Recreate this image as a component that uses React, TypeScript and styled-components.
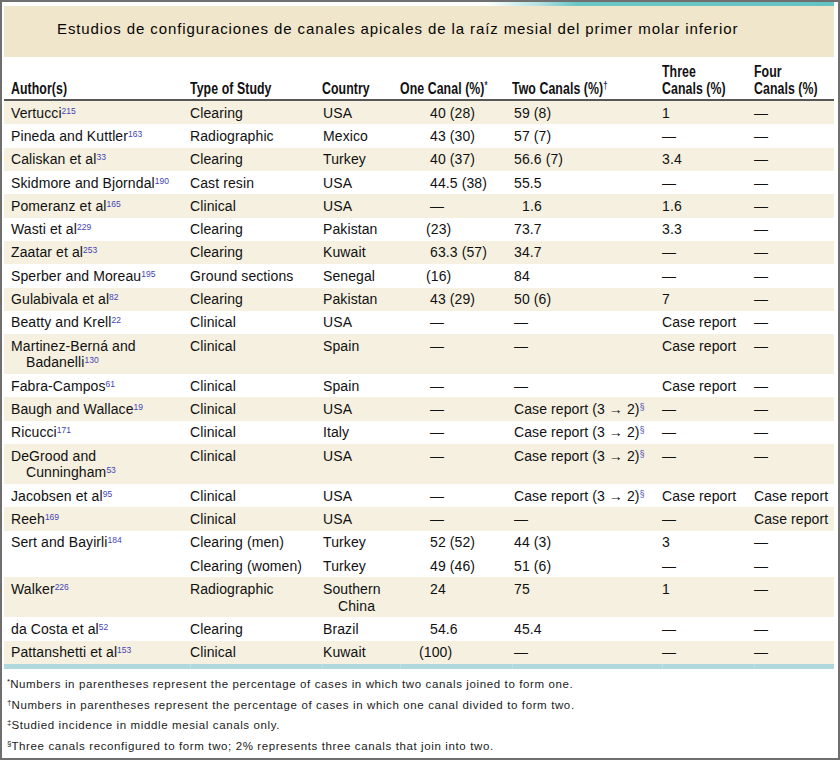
import React from "react";
import styled, { createGlobalStyle } from "styled-components";

const Global = createGlobalStyle`
  html, body { margin: 0; padding: 0; background: #ffffff; }
  body { font-family: "Liberation Sans", Arial, sans-serif; }
`;

const Frame = styled.div`
  width: 840px;
  height: 760px;
  box-sizing: border-box;
  border: 2px solid #6f6f6f;
  background: #ffffff;
  overflow: hidden;
  padding: 0 4px 0 2px;
`;

const TopStrip = styled.div`
  height: 4px;
  background: linear-gradient(90deg, #ffffff 0%, #ffffff 58%, #b9e3e3 64%, #6cc6c6 69%, #66c3c3 100%);
`;

const TitleBand = styled.div`
  height: 51px;
  background: #f0e6cb;
  display: flex;
  align-items: center;
  padding-left: 53px;
  padding-bottom: 7px;
  box-sizing: border-box;
`;

const Title = styled.h1`
  margin: 0;
  font-family: "Liberation Sans", Arial, sans-serif;
  font-weight: normal;
  font-size: 15px;
  letter-spacing: 0.9px;
  color: #050505;
`;

const Table = styled.table`
  width: 830px;
  border-collapse: collapse;
  table-layout: fixed;
  font-family: "Liberation Sans", Arial, sans-serif;
  font-size: 14px;
  letter-spacing: 0.1px;
  color: #111111;
`;

const HeadRow = styled.tr`
  height: 43px;
  border-bottom: 2px solid #575757;
`;

const Th = styled.th<{ $first?: boolean }>`
  font-family: "Liberation Sans", Arial, sans-serif;
  font-weight: bold;
  font-size: 16px;
  line-height: 17px;
  text-align: left;
  vertical-align: bottom;
  white-space: nowrap;
  padding: 0 0 2.5px ${(p) => (p.$first ? "7px" : "0")};
  color: #111111;
`;

const Condensed = styled.span`
  display: block;
  transform: scaleX(0.77);
  transform-origin: left bottom;
`;

const Row = styled.tr<{ $shade?: boolean }>`
  background: ${(p) => (p.$shade ? "#f5f0e0" : "#ffffff")};
`;

const Td = styled.td<{ $first?: boolean; $shift?: number; $hang?: number }>`
  vertical-align: top;
  line-height: 16.67px;
  height: 16.67px;
  padding: 3.6px 0 3.06px
    ${(p) => (p.$first ? 22 : (p.$hang ?? 0) + (p.$shift ?? 0))}px;
  text-indent: ${(p) => (p.$first ? -15 : -(p.$hang ?? 0))}px;
  white-space: nowrap;
`;

const Sup = styled.sup`
  font-size: 8.5px;
  line-height: 0;
  vertical-align: 4.5px;
  color: #4545b5;
  letter-spacing: 0;
`;

const Mark = styled.sup`
  font-size: 10px;
  line-height: 0;
  vertical-align: 5px;
  color: #2a2a6a;
  letter-spacing: 0;
`;

const EndRow = styled.tr`
  height: 5px;
  background: #b1d8dc;
`;

const EndCell = styled.td<{ $first?: boolean }>`
  padding: 0;
  border-left: ${(p) => (p.$first ? "none" : "1px solid #bde0e3")};
`;

const Notes = styled.div`
  padding: 5px 0 0 3px;
  font-family: "Liberation Sans", Arial, sans-serif;
  font-size: 11.5px;
  letter-spacing: 0.62px;
  line-height: 20.8px;
  color: #1a1a1a;
  white-space: nowrap;
`;

const Note = styled.div``;

const NoteMark = styled.sup`
  font-size: 8px;
  line-height: 0;
  vertical-align: 4px;
  letter-spacing: 0;
`;

type Cell = string | { t: string; shift?: number; mark?: string };

type RowData = {
  author?: React.ReactNode;
  ref?: string;
  type: string;
  country: React.ReactNode;
  hangCountry?: boolean;
  one: Cell;
  two: Cell;
  three: Cell;
  four: Cell;
  shade: boolean;
  authorSpan?: number;
  noAuthor?: boolean;
};

const D = "—";
const CR = "Case report (3 → 2)";

const rows: RowData[] = [
  { author: "Vertucci", ref: "215", type: "Clearing", country: "USA", one: "40 (28)", two: "59 (8)", three: "1", four: D, shade: true },
  { author: "Pineda and Kuttler", ref: "163", type: "Radiographic", country: "Mexico", one: "43 (30)", two: "57 (7)", three: D, four: D, shade: false },
  { author: "Caliskan et al", ref: "33", type: "Clearing", country: "Turkey", one: "40 (37)", two: "56.6 (7)", three: "3.4", four: D, shade: true },
  { author: "Skidmore and Bjorndal", ref: "190", type: "Cast resin", country: "USA", one: "44.5 (38)", two: "55.5", three: D, four: D, shade: false },
  { author: "Pomeranz et al", ref: "165", type: "Clinical", country: "USA", one: D, two: { t: "1.6", shift: 8 }, three: "1.6", four: D, shade: true },
  { author: "Wasti et al", ref: "229", type: "Clearing", country: "Pakistan", one: { t: "(23)", shift: -4 }, two: "73.7", three: "3.3", four: D, shade: false },
  { author: "Zaatar et al", ref: "253", type: "Clearing", country: "Kuwait", one: "63.3 (57)", two: "34.7", three: D, four: D, shade: true },
  { author: "Sperber and Moreau", ref: "195", type: "Ground sections", country: "Senegal", one: { t: "(16)", shift: -4 }, two: "84", three: D, four: D, shade: false },
  { author: "Gulabivala et al", ref: "82", type: "Clearing", country: "Pakistan", one: "43 (29)", two: "50 (6)", three: "7", four: D, shade: true },
  { author: "Beatty and Krell", ref: "22", type: "Clinical", country: "USA", one: D, two: D, three: "Case report", four: D, shade: false },
  { author: <>Martinez-Berná and<br />Badanelli</>, ref: "130", type: "Clinical", country: "Spain", one: D, two: D, three: "Case report", four: D, shade: true },
  { author: "Fabra-Campos", ref: "61", type: "Clinical", country: "Spain", one: D, two: D, three: "Case report", four: D, shade: false },
  { author: "Baugh and Wallace", ref: "19", type: "Clinical", country: "USA", one: D, two: { t: CR, mark: "§" }, three: D, four: D, shade: true },
  { author: "Ricucci", ref: "171", type: "Clinical", country: "Italy", one: D, two: { t: CR, mark: "§" }, three: D, four: D, shade: false },
  { author: <>DeGrood and<br />Cunningham</>, ref: "53", type: "Clinical", country: "USA", one: D, two: { t: CR, mark: "§" }, three: D, four: D, shade: true },
  { author: "Jacobsen et al", ref: "95", type: "Clinical", country: "USA", one: D, two: { t: CR, mark: "§" }, three: "Case report", four: "Case report", shade: false },
  { author: "Reeh", ref: "169", type: "Clinical", country: "USA", one: D, two: D, three: D, four: "Case report", shade: true },
  { author: "Sert and Bayirli", ref: "184", authorSpan: 2, type: "Clearing (men)", country: "Turkey", one: "52 (52)", two: "44 (3)", three: "3", four: D, shade: false },
  { noAuthor: true, type: "Clearing (women)", country: "Turkey", one: "49 (46)", two: "51 (6)", three: D, four: D, shade: false },
  { author: "Walker", ref: "226", type: "Radiographic", country: <>Southern<br />China</>, hangCountry: true, one: "24", two: "75", three: "1", four: D, shade: true },
  { author: "da Costa et al", ref: "52", type: "Clearing", country: "Brazil", one: "54.6", two: "45.4", three: D, four: D, shade: false },
  { author: "Pattanshetti et al", ref: "153", type: "Clinical", country: "Kuwait", one: { t: "(100)", shift: -11 }, two: D, three: D, four: D, shade: true },
];

const ValueCell: React.FC<{ c: Cell; base?: number }> = ({ c, base = 0 }) => {
  if (typeof c === "string") return <Td $shift={base}>{c}</Td>;
  return (
    <Td $shift={base + (c.shift ?? 0)}>
      {c.t}
      {c.mark ? <Sup>{c.mark}</Sup> : null}
    </Td>
  );
};

export default function App() {
  return (
    <>
      <Global />
      <Frame>
        <TopStrip />
        <TitleBand>
          <Title>
            Estudios de configuraciones de canales apicales de la raíz mesial del primer molar inferior
          </Title>
        </TitleBand>
        <Table>
          <colgroup>
            <col style={{ width: 186 }} />
            <col style={{ width: 132 }} />
            <col style={{ width: 78 }} />
            <col style={{ width: 112 }} />
            <col style={{ width: 150 }} />
            <col style={{ width: 92 }} />
            <col style={{ width: 80 }} />
          </colgroup>
          <thead>
            <HeadRow>
              <Th $first>
                <Condensed>Author(s)</Condensed>
              </Th>
              <Th>
                <Condensed>Type of Study</Condensed>
              </Th>
              <Th>
                <Condensed>Country</Condensed>
              </Th>
              <Th>
                <Condensed>
                  One Canal (%)<Mark>*</Mark>
                </Condensed>
              </Th>
              <Th>
                <Condensed>
                  Two Canals (%)<Mark>†</Mark>
                </Condensed>
              </Th>
              <Th>
                <Condensed>
                  Three
                  <br />
                  Canals (%)
                </Condensed>
              </Th>
              <Th>
                <Condensed>
                  Four
                  <br />
                  Canals (%)
                </Condensed>
              </Th>
            </HeadRow>
          </thead>
          <tbody>
            {rows.map((r, i) => (
              <Row key={i} $shade={r.shade}>
                {r.noAuthor ? null : (
                  <Td $first rowSpan={r.authorSpan ?? 1}>
                    {r.author}
                    <Sup>{r.ref}</Sup>
                  </Td>
                )}
                <Td>{r.type}</Td>
                <Td $shift={1} $hang={r.hangCountry ? 15 : 0}>
                  {r.country}
                </Td>
                <ValueCell c={r.one} base={30} />
                <ValueCell c={r.two} base={2} />
                <ValueCell c={r.three} />
                <ValueCell c={r.four} />
              </Row>
            ))}
            <EndRow>
              <EndCell $first />
              <EndCell />
              <EndCell />
              <EndCell />
              <EndCell />
              <EndCell />
              <EndCell />
            </EndRow>
          </tbody>
        </Table>
        <Notes>
          <Note>
            <NoteMark>*</NoteMark>Numbers in parentheses represent the percentage of cases in which two canals joined to form one.
          </Note>
          <Note>
            <NoteMark>†</NoteMark>Numbers in parentheses represent the percentage of cases in which one canal divided to form two.
          </Note>
          <Note>
            <NoteMark>‡</NoteMark>Studied incidence in middle mesial canals only.
          </Note>
          <Note>
            <NoteMark>§</NoteMark>Three canals reconfigured to form two; 2% represents three canals that join into two.
          </Note>
        </Notes>
      </Frame>
    </>
  );
}
